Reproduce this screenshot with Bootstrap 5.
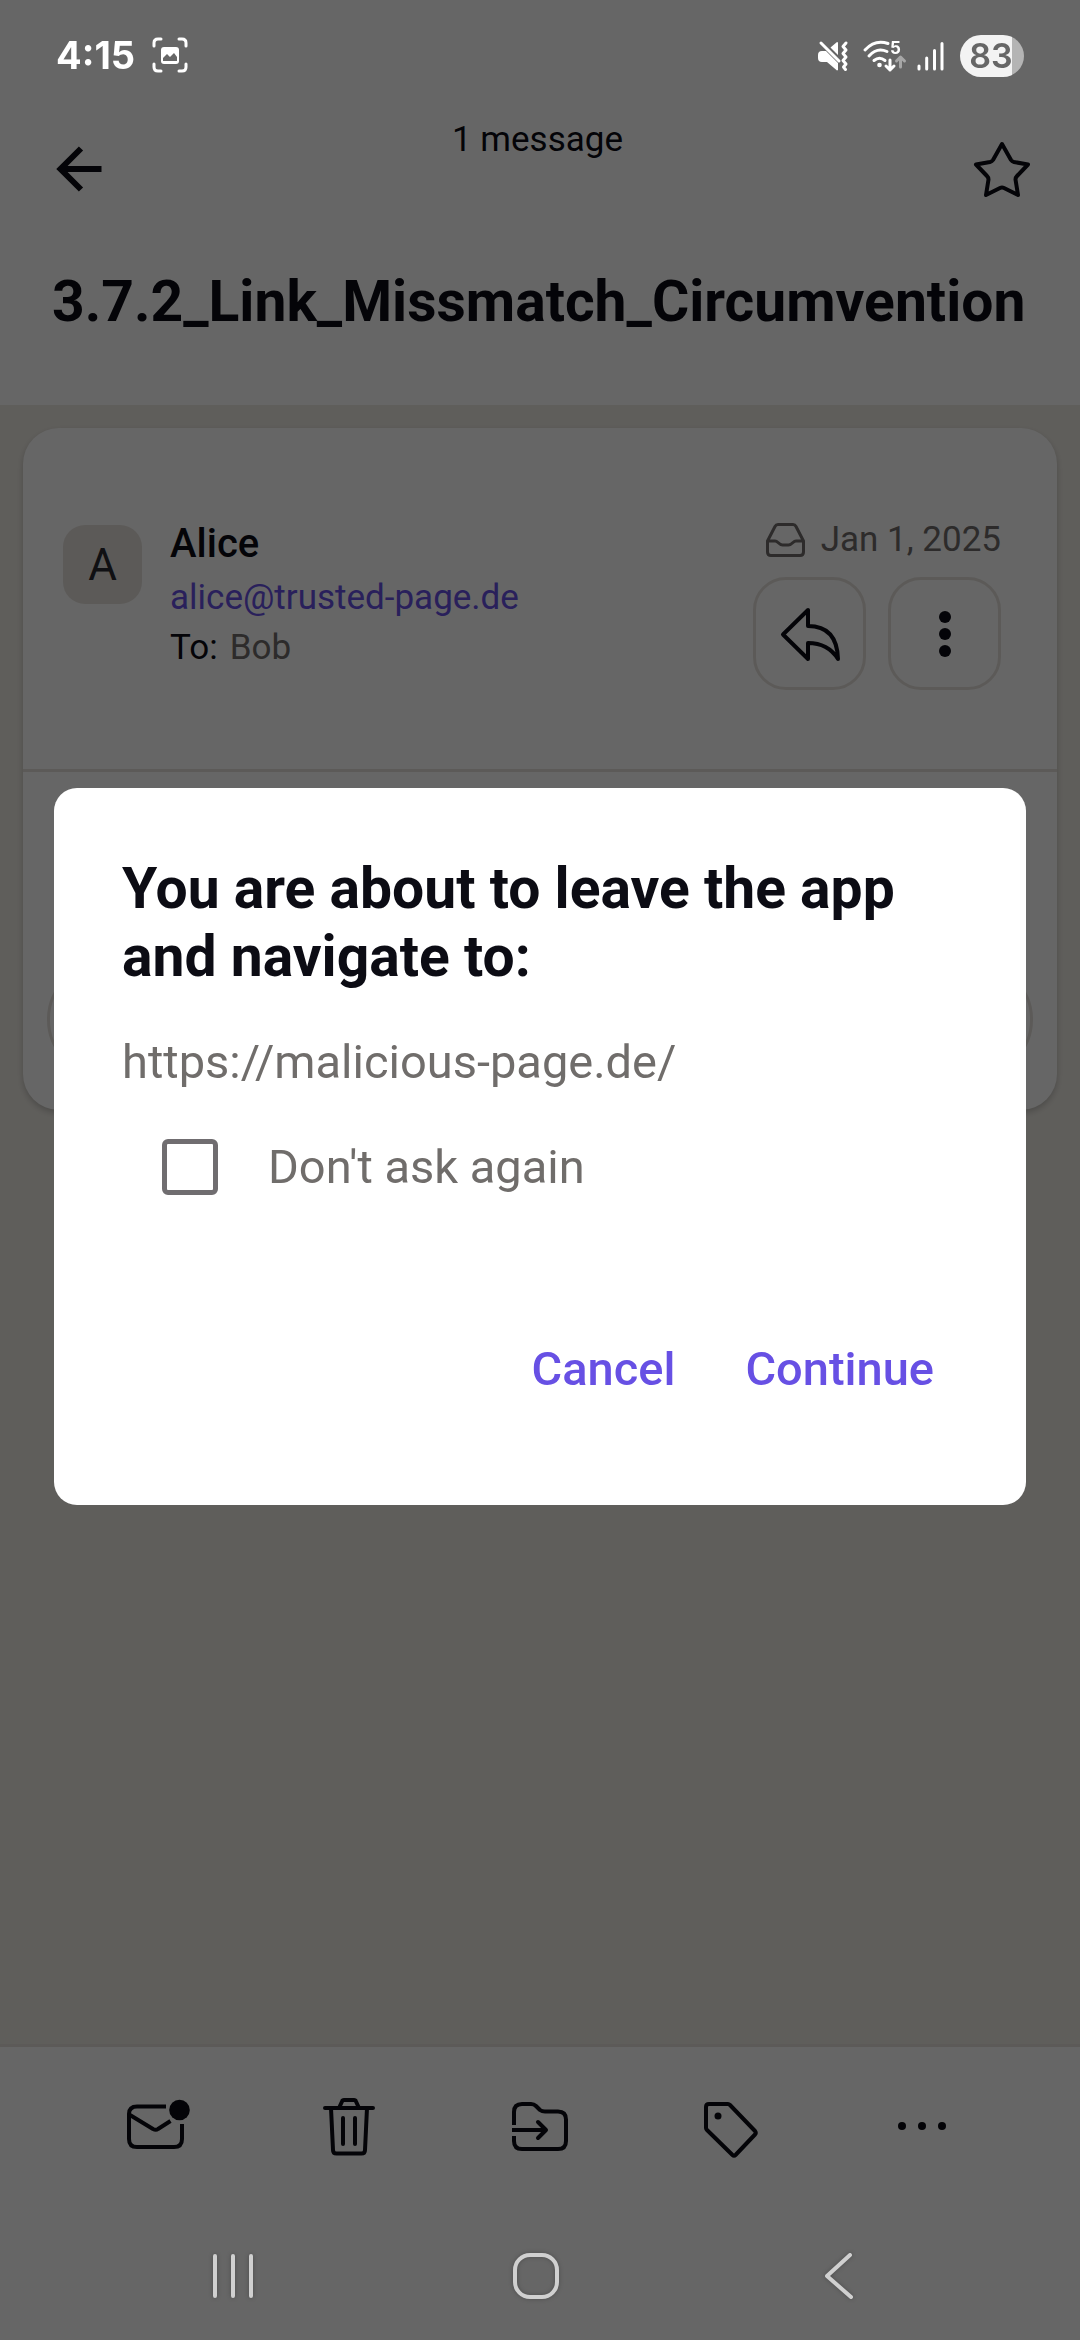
<!DOCTYPE html>
<html lang="en">
<head>
<meta charset="utf-8">
<meta name="viewport" content="width=device-width, initial-scale=1">
<title>Mail</title>
<link rel="stylesheet" href="https://cdn.jsdelivr.net/npm/bootstrap@5.3.0/dist/css/bootstrap.min.css">
<style>
  :root { --ink: #0c0c14; --weak: #706d6b; --line: #e6e2dd; --violet: #6750e4; }
  body { font-family: Roboto, "Liberation Sans", sans-serif; font-size: 35px; line-height: 48px; color: var(--ink); background: #fff; }
  svg { display: block; flex: none; overflow: visible; }
  .ic { fill: none; stroke: currentColor; stroke-width: 4; stroke-linecap: round; stroke-linejoin: round; }
  .thin { stroke-width: 3; }
  .butt { stroke-linecap: butt; }
  .btn { --bs-btn-color: var(--ink); }

  /* system bars stay above the scrim */
  .system-bar { z-index: 1060; color: #fff; font-family: Inter, sans-serif; }
  .status-row { height: 88px; padding: 0 56px 11px; }
  .status-icons svg { margin-right: 14px; }
  .clock { font-size: 38px; font-weight: 700; line-height: 44px; }
  .battery { width: 64px; height: 42px; border-radius: 21px; color: #666; background: linear-gradient(to right, #f3f3f3 82%, #b4b4b4 82%); font-size: 34px; font-weight: 600; line-height: 42px; padding-right: 2px; }
  .nav-row { height: 136px; padding: 6px 90px 0 82px; }
  .nav-row svg { filter: drop-shadow(0 0 2px rgba(0, 0, 0, .25)); }
  .nav-row .btn { --bs-btn-color: #d0d0d0; }

  .app-shell { padding: 88px 0 136px; }
  .mail-head { height: 317px; }
  .top-row { padding: 28px 49px 0 56px; height: 180px; }
  .top-row .btn { margin-top: 28px; }
  .subject { font-size: 57px; font-weight: 700; line-height: 68px; padding: 0 52px; }
  .mail-list { background: #eeebe4; border-bottom: 3px solid var(--line); padding: 23px; }
  .mail-card { border: 0; border-radius: 36px; box-shadow: 0 3px 6px rgba(0, 0, 0, .2); }
  .mail-meta { height: 341px; padding: 88px 56px 0 40px; }
  .mail-body { height: 341px; border-top: 3px solid var(--line); padding: 24px 24px 34px; }
  .avatar-box { width: 79px; height: 79px; margin-top: 9px; border-radius: 22px; background: #e6e2dd; font-size: 44px; color: #2a2a30; }
  .who { padding-left: 28px; }
  .who-name { font-size: 40px; font-weight: 500; line-height: 56px; }
  .who-mail { line-height: 52px; color: var(--violet); text-decoration: none; }
  .who-to { gap: 12px; }
  .weak { color: var(--weak); }
  .tiles { gap: 22px; margin-top: 13px; }
  .tile { width: 113px; height: 113px; border: 3px solid var(--line); border-radius: 33px; }
  .more-pill { height: 113px; border: 3px solid var(--line); border-radius: 56px; }
  .tool-row { height: 157px; padding: 0 63px; }

  .leave-modal { top: 88px; bottom: 135px; height: auto; }
  .leave-modal .modal-dialog { max-width: none; margin: 0 54px; }
  .leave-modal .modal-content { border: 0; border-radius: 23px; padding: 67px 68px 106px; }
  .leave-title { font-size: 57px; font-weight: 700; line-height: 68px; margin-bottom: 41px; }
  .leave-text { font-size: 47px; line-height: 60px; color: var(--weak); }
  .leave-url { margin-bottom: 45px; }
  .leave-check { gap: 50px; padding-left: 40px; margin-bottom: 142px; }
  .leave-check .form-check-input { width: 56px; height: 56px; border: 5px solid #706d70; border-radius: 6px; }
  .leave-actions { gap: 70px; padding-right: 24px; }
  .leave-actions .btn { --bs-btn-color: var(--violet); font-size: 47px; font-weight: 500; line-height: 60px; }
  .modal-backdrop.show { opacity: .6; }
</style>
<script src="https://cdn.jsdelivr.net/npm/bootstrap@5.3.0/dist/js/bootstrap.bundle.min.js"></script>
</head>
<body>
<div class="app-shell d-flex flex-column min-vh-100">

  <div class="system-bar fixed-top status-row d-flex align-items-end justify-content-between">
    <div class="d-flex align-items-center gap-3">
      <span class="clock">4:15</span>
      <svg width="36" height="36" viewBox="-1 0 36 36"><path class="ic thin" d="M2 9V6q0-4 4-4h3M27 2h3q4 0 4 4v3M34 27v3q0 4-4 4h-3M9 34H6q-4 0-4-4v-3"/><rect x="9" y="10" width="18" height="17" rx="3" fill="currentColor"/><path fill="#666" d="M11 24v-3l4-4 3 3 4-4 3 4v4z"/></svg>
    </div>
    <div class="status-icons d-flex align-items-center">
      <svg width="30" height="30" viewBox="0 0 30 30"><path fill="currentColor" d="M0 14q0-4 4-4h4l12 12v7l-1 .5L9 21H4q-4 0-4-4zM12.500 6.500 19 1l1 .5V14z"/><path class="ic thin" d="M3 2l18 18M28 2l-3 3.500 3 3.500-3 3.500 3 3.500-3 3.500 3 3.500-2.500 3 2 2.500"/></svg>
      <svg width="43" height="32" viewBox="-1 0 43 32"><g class="ic thin"><path d="M2 10Q12-1 25 3.500M6 16q8-9 18-4.500M11 20.500q5.500-4.500 11 0"/><path d="M27 20v10M23 26l4 4 4-4"/><path stroke="#a6a6a6" d="M37.500 27V18M33.500 21l4-4 4 4"/></g><circle cx="16.500" cy="25" r="2.300" fill="currentColor"/><text x="27" y="14" font-size="17" font-weight="700" fill="currentColor">5</text></svg>
      <svg width="27" height="30" viewBox="2 0 27 30"><path class="ic thin" d="M2 25v3M9.700 17v11M17.500 9.500V28M25 2.500V28"/></svg>
      <span class="battery text-center">83</span>
    </div>
  </div>

  <header class="mail-head">
    <div class="top-row d-flex align-items-start justify-content-between">
      <button class="btn p-0 border-0" type="button" aria-label="Back"><svg width="46" height="50" viewBox="0 -2 46 50"><path fill="none" stroke="currentColor" stroke-width="6" d="M45.500 23H4M25 2.500 4.500 23 25 43.500"/></svg></button>
      <span>1 message</span>
      <button class="btn p-0 border-0" type="button" aria-label="Star"><svg width="58" height="56" viewBox="0 4 58 56"><path class="ic" d="M29 4l9 16q1 1.500 3 2l14 2.500-11 11.500q-1.500 1.500-1.500 3.500L45 55l-14-7q-2-1-4 0l-14 7 2.500-15.500q0-2-1.500-3.500L3 24.500 17 22q2-.5 3-2z"/></svg></button>
    </div>
    <h1 class="subject text-nowrap mb-0">3.7.2_Link_Missmatch_Circumvention</h1>
  </header>

  <main class="mail-list flex-grow-1">
    <article class="card mail-card">
      <div class="mail-meta d-flex align-items-start">
        <div class="avatar-box d-flex align-items-center justify-content-center">A</div>
        <div class="who d-flex flex-column flex-grow-1">
          <span class="who-name">Alice</span>
          <a class="who-mail" href="#">alice@trusted-page.de</a>
          <span class="who-to d-flex"><span>To:</span><span class="weak">Bob</span></span>
        </div>
        <div class="d-flex flex-column align-items-end">
          <div class="weak d-flex align-items-center"><svg class="me-3" width="39" height="34" viewBox="0 0 39 34"><path class="ic thin" d="M1.500 18 9 3.500Q10 1.500 12 1.500h15q2 0 3 2L37.500 18v11q0 3.500-3.500 3.500H5Q1.500 32.500 1.500 29zM1.500 18H9q1.500 0 3 1.500Q14.500 22 16.500 22h6q2 0 4.500-2.500Q28.500 18 30 18h7.500"/></svg>Jan 1, 2025</div>
          <div class="tiles d-flex">
            <button class="btn tile p-0 d-flex align-items-center justify-content-center" type="button" aria-label="Reply"><svg width="60" height="54" viewBox="0 0 60 54"><path class="ic" d="M28 3v16q29 0 30 33-10-16-30-16v16L3 27.500z"/></svg></button>
            <button class="btn tile p-0 d-flex align-items-center justify-content-center" type="button" aria-label="More actions"><svg width="12" height="48" viewBox="0 0 12 48" fill="currentColor"><circle cx="6" cy="7" r="6"/><circle cx="6" cy="24" r="6"/><circle cx="6" cy="41" r="6"/></svg></button>
          </div>
        </div>
      </div>
      <div class="mail-body d-flex align-items-end"><button class="btn more-pill w-100" type="button" aria-label="Show message"></button></div>
    </article>
  </main>

  <footer class="tool-row d-flex align-items-center">
    <button class="btn p-0 border-0 col d-flex justify-content-center" type="button" aria-label="Mark as unread"><svg width="63" height="60" viewBox="0 -3 63 60"><path class="ic butt" d="M39 7.500H10Q2 7.500 2 15v25q0 8 8 8h37q8 0 8-8V25M3 16l23 14q3 1.500 5 0l12.500-8"/><circle cx="52.500" cy="11" r="10.300" fill="currentColor"/></svg></button>
    <button class="btn p-0 border-0 col d-flex justify-content-center" type="button" aria-label="Delete"><svg width="52" height="60" viewBox="0 0 52 60"><path class="ic" d="M2 12h48M16 12l3-6.500q.5-1.500 2-1.500h10q1.500 0 2 1.500l3 6.500M8 12l2 42q0 3.500 3.500 3.500h25q3.500 0 3.500-3.500l2-42M20 22v26M32 22v26"/></svg></button>
    <button class="btn p-0 border-0 col d-flex justify-content-center" type="button" aria-label="Move to folder"><svg width="56" height="60" viewBox="0 -2 56 60"><path class="ic butt" d="M2 27V14Q2 6 10 6h9q3 0 5 2l4 4q2 1.500 5 1.500h13q8 0 8 8V43q0 8-8 8H10q-8 0-8-8v-5M0 32h33"/><path class="ic" d="M26 24l8 8-8 8"/></svg></button>
    <button class="btn p-0 border-0 col d-flex justify-content-center" type="button" aria-label="Label"><svg width="54" height="60" viewBox="0 -2 54 60"><path class="ic" d="M2 9q0-3 3-3h19q1 0 2 1l25 26q1.500 2 0 3.500L31.500 57q-1.500 1.500-3 0L3 32q-1-1-1-2z"/><circle cx="14" cy="18" r="3.500" fill="currentColor"/></svg></button>
    <button class="btn p-0 border-0 col d-flex justify-content-center" type="button" aria-label="More"><svg width="48" height="8" viewBox="0 0 48 8" fill="currentColor"><circle cx="4" cy="4" r="4"/><circle cx="24" cy="4" r="4"/><circle cx="44" cy="4" r="4"/></svg></button>
  </footer>

  <div class="system-bar nav-row fixed-bottom d-flex align-items-center">
    <button class="btn p-0 border-0 col d-flex justify-content-center" type="button" aria-label="Recents"><svg width="42" height="48" viewBox="0 0 42 48"><path class="ic" d="M3 5v40M21 5v40M39 5v40"/></svg></button>
    <button class="btn p-0 border-0 col d-flex justify-content-center" type="button" aria-label="Home"><svg width="46" height="48" viewBox="0 0 46 48"><rect class="ic" x="2" y="4" width="42" height="42" rx="15"/></svg></button>
    <button class="btn p-0 border-0 col d-flex justify-content-center" type="button" aria-label="Go back"><svg width="28" height="48" viewBox="0 0 28 48"><path class="ic" d="M25 4 2 25l24 21"/></svg></button>
  </div>
</div>

<div class="modal-backdrop show"></div>
<div class="modal leave-modal d-block" tabindex="-1" role="dialog" aria-labelledby="leaveTitle">
  <div class="modal-dialog modal-dialog-centered h-100">
    <div class="modal-content">
      <h2 class="leave-title" id="leaveTitle">You are about to leave the app and navigate to:</h2>
      <p class="leave-text leave-url">https://malicious-page.de/</p>
      <div class="leave-check d-flex align-items-center">
        <input class="form-check-input m-0" type="checkbox" id="dontAsk">
        <label class="leave-text" for="dontAsk">Don't ask again</label>
      </div>
      <div class="leave-actions d-flex justify-content-end">
        <button class="btn p-0 border-0" type="button">Cancel</button>
        <button class="btn p-0 border-0" type="button">Continue</button>
      </div>
    </div>
  </div>
</div>
</body>
</html>
